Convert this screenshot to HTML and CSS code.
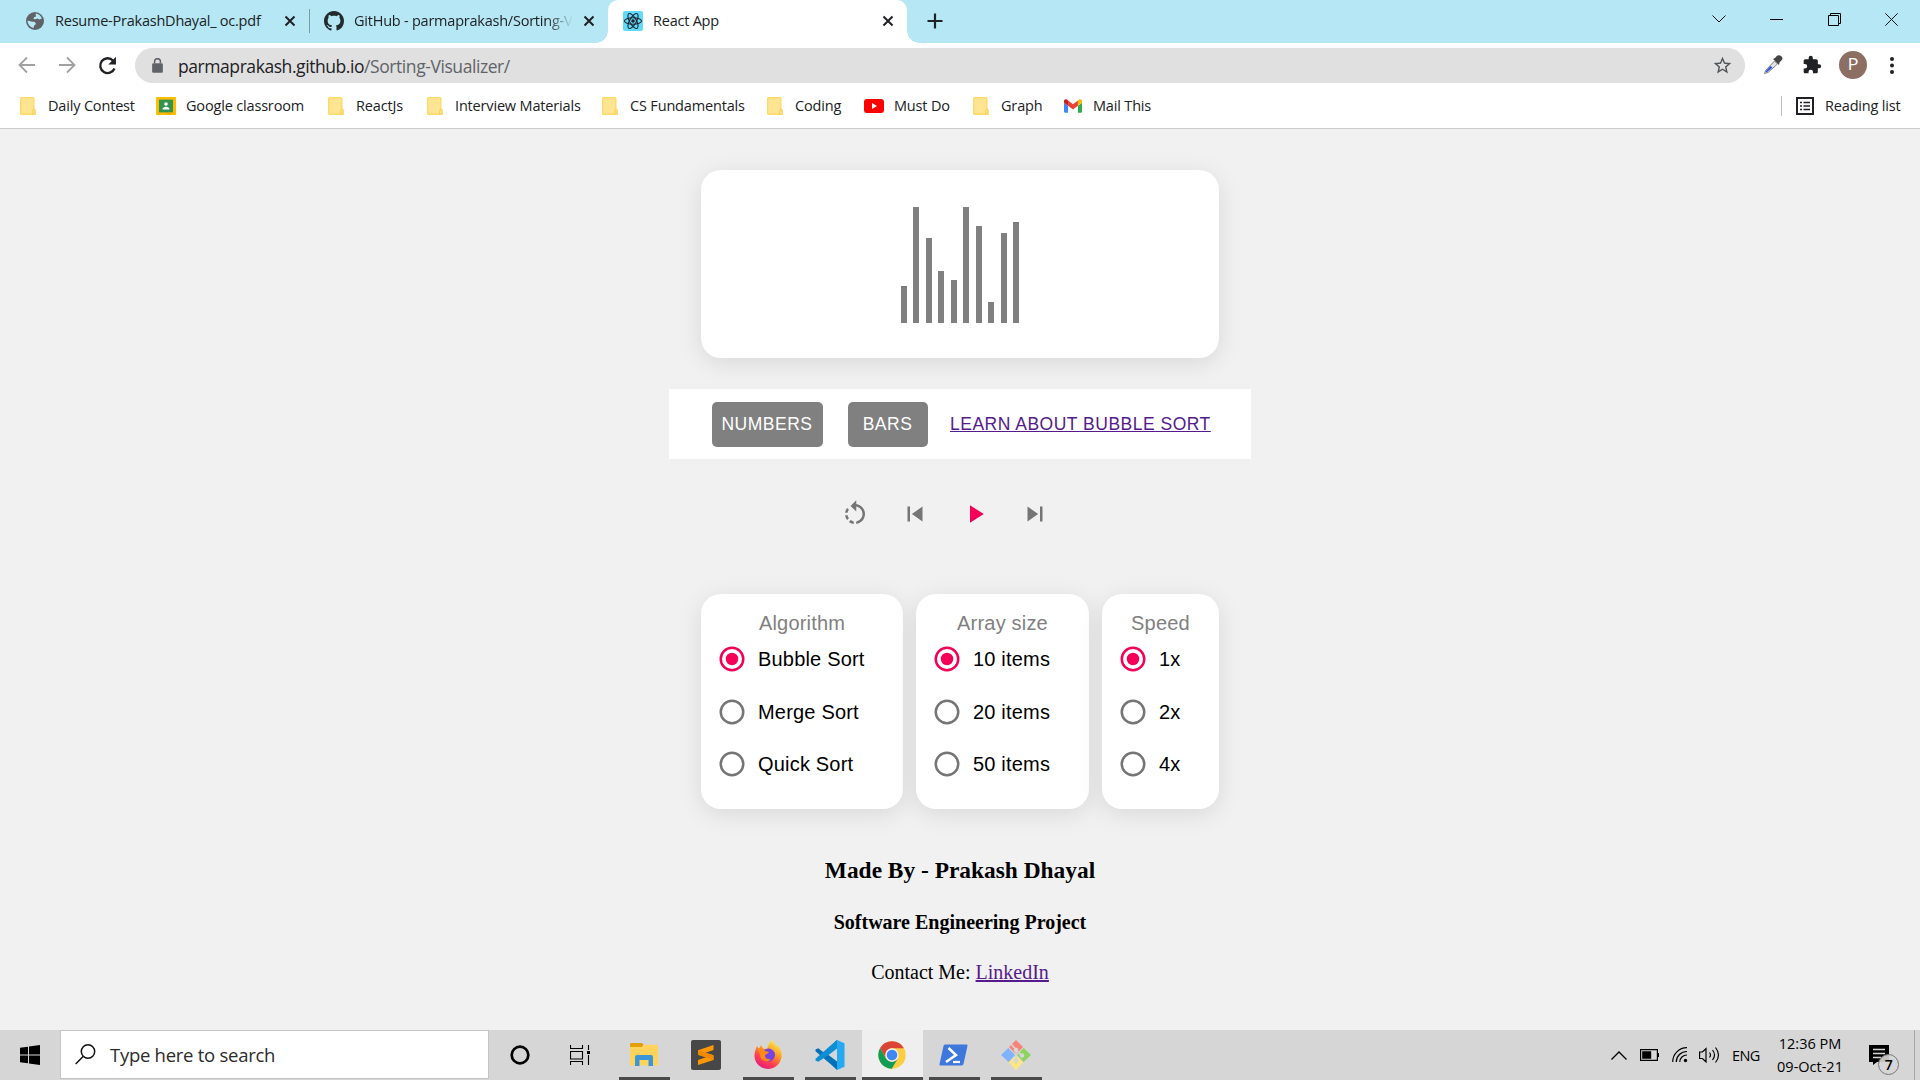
FILE: index.html
```html
<!DOCTYPE html>
<html lang="en">
<head>
<meta charset="utf-8">
<title>React App</title>
<link rel="stylesheet" href="styles.css">
</head>
<body>
<svg width="0" height="0" class="defs">
  <symbol id="folder" viewBox="0 0 16 18"><path d="M1.5 0h11.5a1.5 1.5 0 0 1 1.5 1.5V11.500l1.200 1.200V18H1.500A1.500 1.500 0 0 1 0 16.500v-15A1.500 1.500 0 0 1 1.500 0z" fill="#ffd965"/><path d="M1.300 1.300h11.900v10.200l-.9 1.500v3.600H1.300z" fill="#ffe591"/><path d="M12.800 17.200v-3.500l1.300-1.200 1 1.200v3.500z" fill="#ffe591" stroke="#f5cb4d" stroke-width=".7"/></symbol>
  <symbol id="cross" viewBox="0 0 12 12"><path d="M1.500 1.500l9 9M10.500 1.500l-9 9" stroke="#202124" stroke-width="2" fill="none"/></symbol>
  <symbol id="radio-on" viewBox="0 0 24 24"><circle cx="12" cy="12" r="9" fill="none" stroke="#f50057" stroke-width="2"/><circle cx="12" cy="12" r="5" fill="#f50057"/></symbol>
  <symbol id="radio-off" viewBox="0 0 24 24"><circle cx="12" cy="12" r="9" fill="none" stroke="#757575" stroke-width="2"/></symbol>
</svg>

<header class="tabstrip">
  <div class="tab tab-one">
    <svg class="fav" viewBox="0 0 18 18"><circle cx="9" cy="9" r="9" fill="#5f6368"/><path d="M9.500 1.500c3 .2 5.500 2.300 6.300 5l-2.300 1-2-1-2 .8-2-.3.500-1.800 2-.7zM1.500 8.500l3.800 1 3.500.5 1.200 2-1.800 1.500L7.500 16A7.500 7.500 0 0 1 1.500 8.500z" fill="#b5e8f4"/></svg>
    <span class="tab-title t1">Resume-PrakashDhayal_ oc.pdf</span>
    <svg class="x"><use href="#cross"/></svg>
  </div>
  <div class="tab tab-two">
    <svg class="fav gh" viewBox="0 0 16 16"><path fill="#24292e" fill-rule="evenodd" d="M8 0C3.580 0 0 3.580 0 8c0 3.540 2.290 6.530 5.470 7.590.4.070.55-.17.55-.38 0-.19-.01-.82-.01-1.490-2.010.37-2.530-.49-2.690-.94-.09-.23-.48-.94-.82-1.130-.28-.15-.68-.52-.01-.53.63-.01 1.080.58 1.230.82.72 1.210 1.870.87 2.330.66.070-.52.28-.87.51-1.070-1.780-.2-3.640-.89-3.640-3.950 0-.87.31-1.590.82-2.150-.08-.2-.36-1.020.08-2.120 0 0 .67-.21 2.200.82.64-.18 1.320-.27 2-.27s1.360.09 2 .27c1.530-1.040 2.200-.82 2.200-.82.44 1.100.16 1.920.08 2.120.51.56.82 1.270.82 2.150 0 3.070-1.870 3.750-3.650 3.950.29.25.54.73.54 1.480 0 1.070-.01 1.930-.01 2.200 0 .21.15.46.55.38A8.010 8.010 0 0 0 16 8c0-4.420-3.580-8-8-8z"/></svg>
    <span class="tab-title t2">GitHub - parmaprakash/Sorting-V</span>
    <svg class="x"><use href="#cross"/></svg>
  </div>
  <div class="tab tab-active">
    <svg class="fav react" viewBox="0 0 20 20"><rect width="20" height="20" rx="2" fill="#61dafb"/><g fill="none" stroke="#20232a" stroke-width="1.100"><ellipse cx="10" cy="10" rx="8.500" ry="3.300"/><ellipse cx="10" cy="10" rx="8.500" ry="3.300" transform="rotate(60 10 10)"/><ellipse cx="10" cy="10" rx="8.500" ry="3.300" transform="rotate(120 10 10)"/></g><circle cx="10" cy="10" r="1.800" fill="#20232a"/></svg>
    <span class="tab-title t3">React App</span>
    <svg class="x"><use href="#cross"/></svg>
  </div>
  <svg class="newtab" viewBox="0 0 16 16"><path d="M8 .5v15M.5 8h15" stroke="#202124" stroke-width="2.200"/></svg>
  <div class="winbtns">
    <svg width="14" height="8" viewBox="0 0 14 8"><path d="M.5.500l6.500 6.500 6.500-6.500" fill="none" stroke="#111"/></svg>
    <svg width="13" height="13" viewBox="0 0 13 13"><path d="M0 6.500h13" stroke="#000"/></svg>
    <svg width="13" height="13" viewBox="0 0 13 13"><path d="M.5 2.500h10v10h-10zM2.500 2.500v-2h10v10h-2" fill="none" stroke="#000"/></svg>
    <svg width="13" height="13" viewBox="0 0 13 13"><path d="M.3.300l12.400 12.400M12.700.300L.300 12.700" fill="none" stroke="#111"/></svg>
  </div>
</header>

<nav class="toolbar">
  <svg class="nav" viewBox="0 0 18 18"><path d="M17 9H2M9 1.500L1.500 9 9 16.500" fill="none" stroke="#a0a1a3" stroke-width="1.800"/></svg>
  <svg class="nav" viewBox="0 0 18 18"><path d="M1 9h15M9 1.500L16.500 9 9 16.500" fill="none" stroke="#a0a1a3" stroke-width="1.800"/></svg>
  <svg class="nav reload" viewBox="0 0 18 18"><path d="M15.600 11.800A7 7 0 1 1 14.200 4.300" fill="none" stroke="#202124" stroke-width="2.200"/><path d="M17 .8V8H9.800z" fill="#202124"/></svg>
  <div class="omnibox">
    <svg class="lock" viewBox="0 0 10 14"><rect y="4.800" width="10" height="9" rx="1" fill="#5f6368"/><path d="M2.300 5V3.300a2.700 2.700 0 0 1 5.400 0V5" fill="none" stroke="#5f6368" stroke-width="1.400"/></svg>
    <span class="url">parmaprakash.github.io<span class="path">/Sorting-Visualizer/</span></span>
    <svg class="star" viewBox="0 0 24 24"><path fill="#505357" d="M22 9.240l-7.190-.62L12 2 9.190 8.630 2 9.240l5.460 4.730L5.820 21 12 17.270 18.180 21l-1.630-7.030L22 9.240zM12 15.400l-3.760 2.270 1-4.280-3.320-2.880 4.380-.38L12 6.100l1.710 4.040 4.380.38-3.320 2.880 1 4.280L12 15.400z"/></svg>
  </div>
  <div class="exts">
    <svg class="ext" viewBox="0 0 20 20"><path d="M1.500 18.500l1-3 9-9.500 3 3-9.500 8.500z" fill="#dde2ea" stroke="#858585" stroke-width="1"/><path d="M2.500 16.500L7.500 11l2 1.500-6 5z" fill="#2d50dc"/><path d="M10 4l2-1 2-2.200c2-1.500 5.500 0 5.500 2.700 0 1.500-2 2.700-3 4L16 10z" fill="#444"/></svg>
    <svg class="ext puzzle" viewBox="0 0 24 24"><path fill="#202124" d="M20.500 11H19V7c0-1.100-.9-2-2-2h-4V3.500a2.500 2.500 0 0 0-5 0V5H4c-1.100 0-1.990.9-1.990 2v3.800H3.500a2.700 2.700 0 0 1 0 5.400H2V20c0 1.100.9 2 2 2h3.800v-1.500a2.700 2.700 0 0 1 5.400 0V22H17c1.100 0 2-.9 2-2v-4h1.500a2.500 2.500 0 0 0 0-5z"/></svg>
    <span class="avatar">P</span>
    <svg class="dots" viewBox="0 0 4 17"><g fill="#202124"><circle cx="2" cy="2" r="2"/><circle cx="2" cy="8.500" r="2"/><circle cx="2" cy="15" r="2"/></g></svg>
  </div>
</nav>

<div class="bookmarks">
  <div class="marks">
    <a class="mark"><svg class="fold"><use href="#folder"/></svg>Daily Contest</a>
    <a class="mark wide"><svg class="site" viewBox="0 0 20 18"><rect width="20" height="18" rx="1" fill="#fbbc04"/><rect x="3" y="2.600" width="14" height="12.800" fill="#34934f"/><circle cx="10" cy="7" r="1.800" fill="#fff"/><path d="M6.500 12.500c0-3.800 7-3.800 7 0z" fill="#fff"/><path d="M11 15.400h4V17h-4z" fill="#e8a500"/></svg>Google classroom</a>
    <a class="mark"><svg class="fold"><use href="#folder"/></svg>ReactJs</a>
    <a class="mark"><svg class="fold"><use href="#folder"/></svg>Interview Materials</a>
    <a class="mark"><svg class="fold"><use href="#folder"/></svg>CS Fundamentals</a>
    <a class="mark"><svg class="fold"><use href="#folder"/></svg>Coding</a>
    <a class="mark wide"><svg class="site" viewBox="0 0 20 18"><rect y="2" width="20" height="14" rx="3" fill="#f00"/><path d="M8 6v6l5-3z" fill="#fff"/></svg>Must Do</a>
    <a class="mark"><svg class="fold"><use href="#folder"/></svg>Graph</a>
    <a class="mark gm"><svg class="site" viewBox="52 42 88 66"><path fill="#4285f4" d="M58 108h14V74L52 59v43c0 3.320 2.690 6 6 6"/><path fill="#34a853" d="M120 108h14c3.320 0 6-2.690 6-6V59l-20 15"/><path fill="#fbbc04" d="M120 48v26l20-15v-8c0-7.420-8.470-11.650-14.400-7.200"/><path fill="#ea4335" d="M72 74V48l24 18 24-18v26L96 92"/><path fill="#c5221f" d="M52 51v8l20 15V48l-5.600-4.200c-5.940-4.450-14.400-.22-14.400 7.200"/></svg>Mail This</a>
  </div>
  <div class="reading">
    <svg width="18" height="18" viewBox="0 0 18 18"><rect x="1" y="1" width="16" height="16" fill="none" stroke="#202124" stroke-width="2"/><path d="M4 5.500h2M7.500 5.500H14M4 9h2M7.500 9H14M4 12.500h2M7.500 12.500H14" stroke="#202124" stroke-width="1.600"/></svg>
    <span>Reading list</span>
  </div>
</div>

<main class="app">
  <section class="card chart">
    <i class="bar" style="height:37px"></i><i class="bar" style="height:116px"></i><i class="bar" style="height:85px"></i><i class="bar" style="height:52px"></i><i class="bar" style="height:43px"></i><i class="bar" style="height:116px"></i><i class="bar" style="height:97px"></i><i class="bar" style="height:21px"></i><i class="bar" style="height:90px"></i><i class="bar" style="height:101px"></i>
  </section>
  <section class="modes">
    <button class="btn numbers">NUMBERS</button>
    <button class="btn bars">BARS</button>
    <a class="learn" href="#">LEARN ABOUT BUBBLE SORT</a>
  </section>
  <section class="controls">
    <svg viewBox="0 0 24 24"><path d="M7.110 8.530L5.700 7.110C4.800 8.270 4.240 9.610 4.070 11h2.020c.14-.87.49-1.720 1.020-2.470zM6.090 13H4.070c.17 1.390.72 2.730 1.620 3.890l1.410-1.420c-.52-.75-.87-1.590-1.010-2.470zm1.010 5.320c1.160.9 2.510 1.440 3.900 1.610V17.900c-.87-.15-1.710-.49-2.460-1.030L7.100 18.320zM13 4.070V1L8.450 5.550 13 10V6.090c2.840.48 5 2.940 5 5.910s-2.160 5.430-5 5.910v2.020c3.950-.49 7-3.850 7-7.930s-3.050-7.440-7-7.930z"/></svg>
    <svg viewBox="0 0 24 24"><path d="M6 6h2v12H6zm3.500 6l8.500 6V6z"/></svg>
    <svg class="play" viewBox="0 0 24 24"><path d="M8 5v14l11-7z"/></svg>
    <svg viewBox="0 0 24 24"><path d="M6 18l8.500-6L6 6v12zM16 6v12h2V6h-2z"/></svg>
  </section>
  <section class="options">
    <div class="card opt algo">
      <h2>Algorithm</h2>
      <label><svg><use href="#radio-on"/></svg>Bubble Sort</label>
      <label><svg><use href="#radio-off"/></svg>Merge Sort</label>
      <label><svg><use href="#radio-off"/></svg>Quick Sort</label>
    </div>
    <div class="card opt size">
      <h2>Array size</h2>
      <label><svg><use href="#radio-on"/></svg>10 items</label>
      <label><svg><use href="#radio-off"/></svg>20 items</label>
      <label><svg><use href="#radio-off"/></svg>50 items</label>
    </div>
    <div class="card opt speed">
      <h2>Speed</h2>
      <label><svg><use href="#radio-on"/></svg>1x</label>
      <label><svg><use href="#radio-off"/></svg>2x</label>
      <label><svg><use href="#radio-off"/></svg>4x</label>
    </div>
  </section>
  <footer class="credits">
    <h3>Made By - Prakash Dhayal</h3>
    <h4>Software Engineering Project</h4>
    <p>Contact Me: <a href="#">LinkedIn</a></p>
  </footer>
</main>

<div class="taskbar">
  <div class="start"><svg width="20" height="20" viewBox="0 0 20 20"><path d="M0 2.800L8 1.700v7.800H0zM9 1.500L20 0v9.500H9zM0 10.500h8v7.800L0 17.200zM9 10.500h11V20L9 18.500z"/></svg></div>
  <div class="search">
    <svg width="21" height="21" viewBox="0 0 21 21"><circle cx="13" cy="7.500" r="6.700" fill="none" stroke="#111" stroke-width="1.500"/><path d="M8.300 12.300L.7 20" stroke="#111" stroke-width="1.500"/></svg>
    <span>Type here to search</span>
  </div>
  <div class="task cortana"><svg width="20" height="20" viewBox="0 0 20 20"><circle cx="10" cy="10" r="8.300" fill="none" stroke="#000" stroke-width="2.700"/></svg></div>
  <div class="task view"><svg width="21" height="20" viewBox="0 0 21 20"><path d="M.5 0v3.500h12V0M.5 20v-3.500h12V20M.5 6.500h12v7.500H.5zM18.500 0v5M18.500 10v10" fill="none" stroke="#000" stroke-width="1.100"/><path d="M17 6h3v3h-3z"/></svg></div>
  <div class="task open explorer"><svg width="28" height="24" viewBox="0 0 28 24"><path d="M0 1a1 1 0 0 1 1-1h11l1.500 1.500L12 4H0z" fill="#e3a008"/><path d="M0 4h12l2-2.300h12.500L28 3v19.500H0z" fill="#ffd35c"/><path d="M5 23V14a2 2 0 0 1 2-2h14a2 2 0 0 1 2 2v9h-4.500v-6h-9v6z" fill="#3a96d8"/></svg></div>
  <div class="task"><svg width="30" height="30" viewBox="0 0 30 30"><rect width="30" height="30" rx="2" fill="#474747"/><path d="M7 10.200L22.500 5v5l-8 2.800 8 2.500V20L7 25v-5l8-2.700-8-2.500z" fill="#ff9800"/><path d="M7 10.200l15.500 5V20L7 14.800z" fill="#f08a00"/></svg></div>
  <div class="task open"><svg width="28" height="30" viewBox="0 0 28 30"><defs><linearGradient id="fx" x1=".8" y1="0" x2=".25" y2="1"><stop offset="0" stop-color="#fff44f"/><stop offset=".4" stop-color="#ff9a24"/><stop offset=".7" stop-color="#ff4051"/><stop offset="1" stop-color="#e31587"/></linearGradient></defs><path d="M3 6l2 3 2-4 2 3.500 4 .5C14 4 17 1 18.500 0c.5 3 3 4 5 7l1-1C27 10 28 13 27.500 17A13.600 13.600 0 0 1 .5 17C.3 12 2 9 3 6z" fill="url(#fx)"/><circle cx="14.500" cy="15" r="6.500" fill="#7542e5"/><path d="M3 9c4-1 6 0 8 2l4 1c-1 2-4 2-4 4s3 4 6 3c-4 5-12 1-11-5z" fill="#ff8a16"/></svg></div>
  <div class="task open"><svg width="30" height="30" viewBox="0 0 30 30"><path d="M22 0L8.500 12.300 3.200 8.200.5 9.500v1.800L16 24.500 22 30l1-8-1-2z" fill="#0071b8"/><path d="M.5 18.700L22 0v9.500L3.200 21.800.5 20.500z" fill="#0d8fd6"/><path d="M22 0l7.500 3.200v23.600L22 30z" fill="#25a9f2"/><path d="M22 8.500v13L13.500 15z" fill="#d6d6d6"/></svg></div>
  <div class="task open chrome"><svg width="28" height="28" viewBox="0 0 28 28"><circle cx="14" cy="14" r="13.700" fill="#ffcd40"/><path d="M2.100 7.100A13.700 13.700 0 0 1 25.900 7.150H14a7 7 0 0 0-6 10z" fill="#db4437"/><path d="M2.100 7.100A13.700 13.700 0 0 0 13.800 27.700l6-10.200a7 7 0 0 1-11.800 0z" fill="#0f9d58"/><circle cx="14" cy="14" r="6.700" fill="#f1f1f1"/><circle cx="14" cy="14" r="5.300" fill="#4285f4"/></svg></div>
  <div class="task open"><svg width="29" height="22" viewBox="0 0 29 22"><path d="M6 .5h21.500a1 1 0 0 1 1 1.200L24.500 20a2 2 0 0 1-1.800 1.500H1.500a1 1 0 0 1-1-1.200L4.500 2A2 2 0 0 1 6 .5z" fill="#3f78dc"/><path d="M9.500 4l7.500 7-10 7" fill="none" stroke="#fff" stroke-width="2.500"/><path d="M14 18h7" stroke="#fff" stroke-width="2.200"/></svg></div>
  <div class="task open"><svg width="30" height="30" viewBox="0 0 30 30"><path d="M15 0l7 7-7 7.500-7-7.500z" fill="#f88379"/><path d="M7.300 8L14 15l-6.500 7L0 15z" fill="#80b3ff"/><path d="M22.700 8L30 15l-7.300 7L16 15z" fill="#8dd35f"/><path d="M15 15.500l7 7-7 7.500-7-7.500z" fill="#ffe680"/><path d="M10 4l10 11M15 9v15" stroke="#d6d6d6" stroke-width="1.600"/><circle cx="15" cy="10" r="2.300" fill="#d6d6d6"/><circle cx="21" cy="15.500" r="2.300" fill="#d6d6d6"/><circle cx="15" cy="20.500" r="2.300" fill="#d6d6d6"/></svg></div>
  <div class="tray">
    <svg class="chev" width="16" height="9" viewBox="0 0 16 9"><path d="M.5 8.500L8 1l7.500 7.500" fill="none" stroke="#000" stroke-width="1.300"/></svg>
    <svg class="batt" width="19" height="12" viewBox="0 0 19 12"><path d="M.6.600h16.800v10.800H.6z" fill="none" stroke="#000" stroke-width="1.200"/><path d="M2.200 2.200h9v7.600h-9zM17.500 4H19v4h-1.500z"/></svg>
    <svg class="wifi" width="16" height="16" viewBox="0 0 16 16"><g fill="none" stroke="#000" stroke-width="1.200"><path d="M.7 15C.7 7 7 .7 15 .7M4.300 15C4.300 9 9 4.500 15 4.500M7.800 15c0-4 3.200-7 7.200-7"/></g><circle cx="13.500" cy="13.500" r="1.700"/></svg>
    <svg class="vol" width="21" height="18" viewBox="0 0 21 18"><path d="M.6 6v6.500h2.800L7 15.800V2.700L3.400 6zM10.500 6.500q2 2.500 0 5M13.500 4q4 5 0 10M16.500 1.500q6 7.500 0 15" fill="none" stroke="#000" stroke-width="1.200"/></svg>
    <span class="eng">ENG</span>
    <div class="clock"><span class="time">12:36 PM</span><span class="date">09-Oct-21</span></div>
    <div class="note"><svg width="20" height="20" viewBox="0 0 20 20"><path d="M0 0h20v17H8l-4 3v-3H0z"/><path d="M4 4.500h12M4 8.500h12M4 12.500h8" stroke="#d6d6d6" stroke-width="1.300"/></svg><span class="badge">7</span></div>
    <i class="desktop"></i>
  </div>
</div>
</body>
</html>
```
FILE: styles.css
```css
* { box-sizing: border-box; }
body { margin: 0; width: 1920px; height: 1080px; overflow: hidden; display: flex; flex-direction: column; background: #f1f1f1; font-family: "Open Sans", "Noto Sans", sans-serif; color: #202124; }
svg { display: block; flex: none; fill: #000; }
.defs { display: none; }

.tabstrip { height: 43px; flex: none; display: flex; background: #b5e8f4; position: relative; }
.tab { display: flex; align-items: center; height: 42px; white-space: nowrap; font-size: 14.500px; }
.tab .fav { width: 18px; height: 18px; margin-right: 11px; }
.tab .x { width: 12px; height: 12px; }
.tab-title { overflow: hidden; letter-spacing: -.23px; flex: none; padding-bottom: 1px; }
.tab-one { width: 310px; padding-left: 26px; background: linear-gradient(#7d9aa1, #7d9aa1) right 9px / 1px 24px no-repeat; }
.tab-one .t1 { width: 229px; }
.tab-two { width: 298px; padding-left: 14px; }
.tab-two .gh { width: 20px; height: 20px; margin-right: 10px; }
.tab-two .t2 { width: 219px; margin-right: 10px; -webkit-mask-image: linear-gradient(90deg, #000 88%, transparent); mask-image: linear-gradient(90deg, #000 88%, transparent); }
.tab-active { width: 299px; height: 43px; padding: 0 0 1px 15px; background: #fff; border-radius: 10px 10px 0 0; position: relative; }
.tab-active::before, .tab-active::after { content: ""; position: absolute; bottom: 0; width: 12px; height: 12px; }
.tab-active::before { left: -12px; background: radial-gradient(circle at 0 0, transparent 11.500px, #fff 12px); }
.tab-active::after { right: -12px; background: radial-gradient(circle at 100% 0, transparent 11.500px, #fff 12px); }
.tab-active .react { width: 20px; height: 20px; margin-right: 10px; }
.tab-active .t3 { width: 229px; }
.newtab { width: 16px; height: 16px; margin: 13px 0 0 20px; }
.winbtns { margin-left: auto; height: 38px; display: grid; grid-template-columns: repeat(4, 57.300px); align-items: center; justify-items: center; }

.toolbar { height: 45px; flex: none; background: #fff; display: flex; align-items: center; padding: 0 0 1px 18px; }
.nav { width: 18px; height: 18px; margin-right: 22px; }
.reload { width: 19px; height: 19px; margin-right: 18px; }
.omnibox { width: 1610px; height: 35px; border-radius: 18px; background: #e0e0e0; display: flex; align-items: center; padding: 0 12px 0 17px; margin-top: 1px; }
.lock { width: 11px; height: 15px; margin-right: 15px; }
.url { font-size: 17.500px; letter-spacing: -.43px; line-height: 34px; }
.path { color: #5f6368; }
.star { width: 21px; height: 21px; margin-left: auto; }
.exts { display: flex; align-items: center; padding-left: 18px; }
.ext { width: 20px; height: 20px; margin-right: 19px; }
.puzzle { width: 20px; height: 20px; margin-right: 17px; }
.avatar { width: 28px; height: 28px; border-radius: 50%; background: #8d6e63; color: #fff; font: 16px/28px Roboto, sans-serif; text-align: center; margin-right: 23px; }
.dots { width: 4px; height: 17px; }

.bookmarks { height: 41px; flex: none; display: flex; justify-content: space-between; background: #fff; border-bottom: 1px solid #cbcbcb; padding: 0 18px 5px 20px; font-size: 14.500px; letter-spacing: -.17px; }
.marks { display: grid; grid-template-columns: 136px 172px 99px 175px 165px 97px 109px 91px 120px; }
.mark { display: flex; align-items: center; white-space: nowrap; }
.fold { width: 16px; height: 18px; margin-right: 12px; }
.site { width: 20px; height: 18px; margin-right: 10px; }
.gm .site { width: 18px; height: 14px; margin-right: 11px; }
.reading { display: flex; align-items: center; gap: 11px; height: 20px; margin-top: 8px; border-left: 1px solid #bdc1c6; padding-left: 14px; width: 121px; white-space: nowrap; }
.reading span { margin-bottom: 1px; }

.app { flex: 1; display: flex; flex-direction: column; align-items: center; padding-top: 41px; font-family: "Liberation Sans", Arial, sans-serif; }
.card { background: #fff; border-radius: 20px; box-shadow: 0 5px 25px rgba(0, 0, 0, .1); }
.chart { width: 518px; height: 188px; flex: none; display: flex; justify-content: center; align-items: flex-end; gap: 6.500px; padding-bottom: 35px; }
.bar { width: 6px; background: gray; }
.modes { margin-top: 31px; width: 582px; height: 70px; flex: none; display: flex; align-items: center; background: #fff; padding-left: 43px; font-size: 17.500px; letter-spacing: .5px; }
.btn { height: 45px; border: 0; border-radius: 5px; background: gray; color: #fff; font: inherit; letter-spacing: inherit; padding: 1px 1px 0 0; }
.numbers { width: 111px; }
.bars { width: 80px; margin: 0 22px 0 25px; }
.learn { color: #551a8b; white-space: nowrap; margin-top: 1px; }
.controls { display: flex; gap: 30px; margin-top: 40px; width: 210px; margin-right: 30px; }
.controls svg { width: 30px; height: 30px; fill: #757575; }
.controls .play { fill: #f50057; }
.options { display: flex; gap: 13px; margin-top: 65px; width: 518px; }
.opt { height: 215px; padding: 17px 0 0 16px; color: #000; font-size: 20px; letter-spacing: .19px; }
.algo { width: 202px; }
.size { width: 173px; }
.speed { width: 117px; }
.opt h2 { margin: 0 0 0 -16px; height: 22px; font-weight: 400; font-size: 20px; line-height: 24px; text-align: center; color: gray; }
.opt label { display: flex; align-items: center; height: 52.500px; line-height: 30px; }
.opt svg { width: 30px; height: 30px; margin-right: 11px; }
.credits { margin-top: 46px; text-align: center; color: #000; font-family: "Liberation Serif", "Times New Roman", serif; }
.credits h3, .credits h4, .credits p { margin: 0; white-space: nowrap; }
.credits h3 { font-size: 23.400px; line-height: 30px; }
.credits h4 { font-size: 20px; line-height: 24px; margin-top: 25px; }
.credits p { font-size: 20px; line-height: 24px; margin-top: 26px; }
.credits a { color: #551a8b; }

.taskbar { height: 50px; flex: none; display: flex; background: #d6d6d6; color: #000; }
.start { width: 60px; display: flex; align-items: center; justify-content: center; }
.search { width: 429px; margin: 0 0 1px; border: 1px solid #c4c4c4; background: #fff; display: flex; align-items: center; gap: 14px; padding-left: 14px; font-size: 18.500px; letter-spacing: -.27px; color: #2b2b2b; }
.task { width: 51px; height: 50px; margin-right: 11px; padding-right: 2px; display: flex; align-items: center; justify-content: center; flex: none; }
.cortana { width: 62px; margin-right: 0; padding-right: 0; }
.view { width: 60px; margin-right: 8px; }
.open { border-bottom: 3px solid #4a4a4a; padding-top: 3px; }
.chrome { width: 61px; margin: 0 6px 0 -5px; background: #efefef; }
.tray { margin-left: auto; display: flex; align-items: center; font-size: 14.500px; letter-spacing: -.3px; white-space: nowrap; }
.batt { margin-left: 13px; }
.wifi { margin-left: 13px; }
.vol { margin-left: 11px; }
.eng { width: 30px; margin-left: 12px; letter-spacing: -.6px; }
.clock { display: flex; flex-direction: column; align-items: center; width: 70px; margin: 0 24px 0 13px; line-height: 23px; letter-spacing: 0; }
.note { width: 20px; height: 20px; position: relative; }
.badge { position: absolute; left: 9px; top: 9px; width: 21px; height: 21px; border: 1px solid #777; border-radius: 50%; background: rgba(214, 214, 214, .9); font-size: 14px; line-height: 19px; text-align: center; font-weight: 600; }
.desktop { width: 6px; height: 50px; margin-left: 25px; border-left: 1px solid #a8a8a8; }
```
